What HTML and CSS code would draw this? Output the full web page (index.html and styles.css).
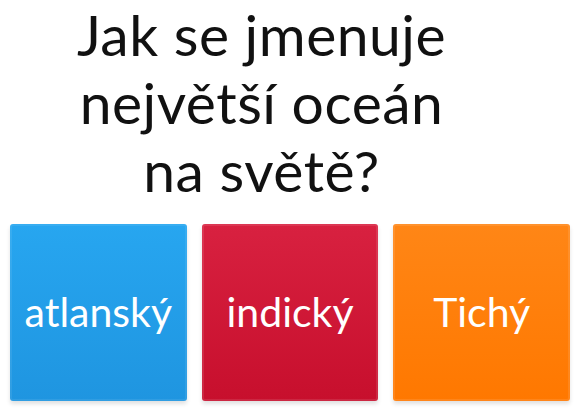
FILE: index.html
```html
<!DOCTYPE html>
<html lang="cs">
<head>
<meta charset="utf-8">
<title>Kvíz</title>
<link rel="stylesheet" href="styles.css">
</head>
<body>
<div class="quiz">
  <h1 class="question">Jak se jmenuje<br>největší oceán<br>na světě?</h1>
  <div class="options">
    <div class="option blue">atlanský</div>
    <div class="option red">indický</div>
    <div class="option orange">Tichý</div>
  </div>
</div>
</body>
</html>
```
FILE: styles.css
```css
html, body {
  margin: 0;
  padding: 0;
  background: #ffffff;
}
.quiz {
  width: 581px;
  height: 413px;
  overflow: hidden;
  font-family: Lato, "Open Sans", sans-serif;
}
.question {
  margin: 0;
  padding: 0 58px 0 0;
  font-size: 57px;
  font-weight: 400;
  line-height: 68px;
  letter-spacing: 0.5px;
  color: #111111;
  text-align: center;
}
.options {
  display: flex;
  gap: 15px;
  padding: 0 11px 0 10px;
  margin-top: 20px;
}
.option {
  width: 177px;
  height: 177px;
  border-radius: 3px;
  display: flex;
  align-items: center;
  justify-content: center;
  color: #ffffff;
  font-size: 41px;
  padding-bottom: 2px;
  box-sizing: border-box;
}
.blue {
  background: linear-gradient(#27a6f0, #1f95e0);
  box-shadow: inset 0 0 0 2px rgba(255,255,255,0.08), 0 3px 4px rgba(0,0,0,0.12);
}
.red {
  background: linear-gradient(#d82140, #c70f2d);
  box-shadow: inset 0 0 0 2px rgba(255,255,255,0.1), 0 3px 4px rgba(0,0,0,0.12);
}
.orange {
  background: linear-gradient(#ff8616, #ff7800);
  box-shadow: inset 0 0 0 2px rgba(255,255,255,0.1), 0 3px 4px rgba(0,0,0,0.12);
}
```
